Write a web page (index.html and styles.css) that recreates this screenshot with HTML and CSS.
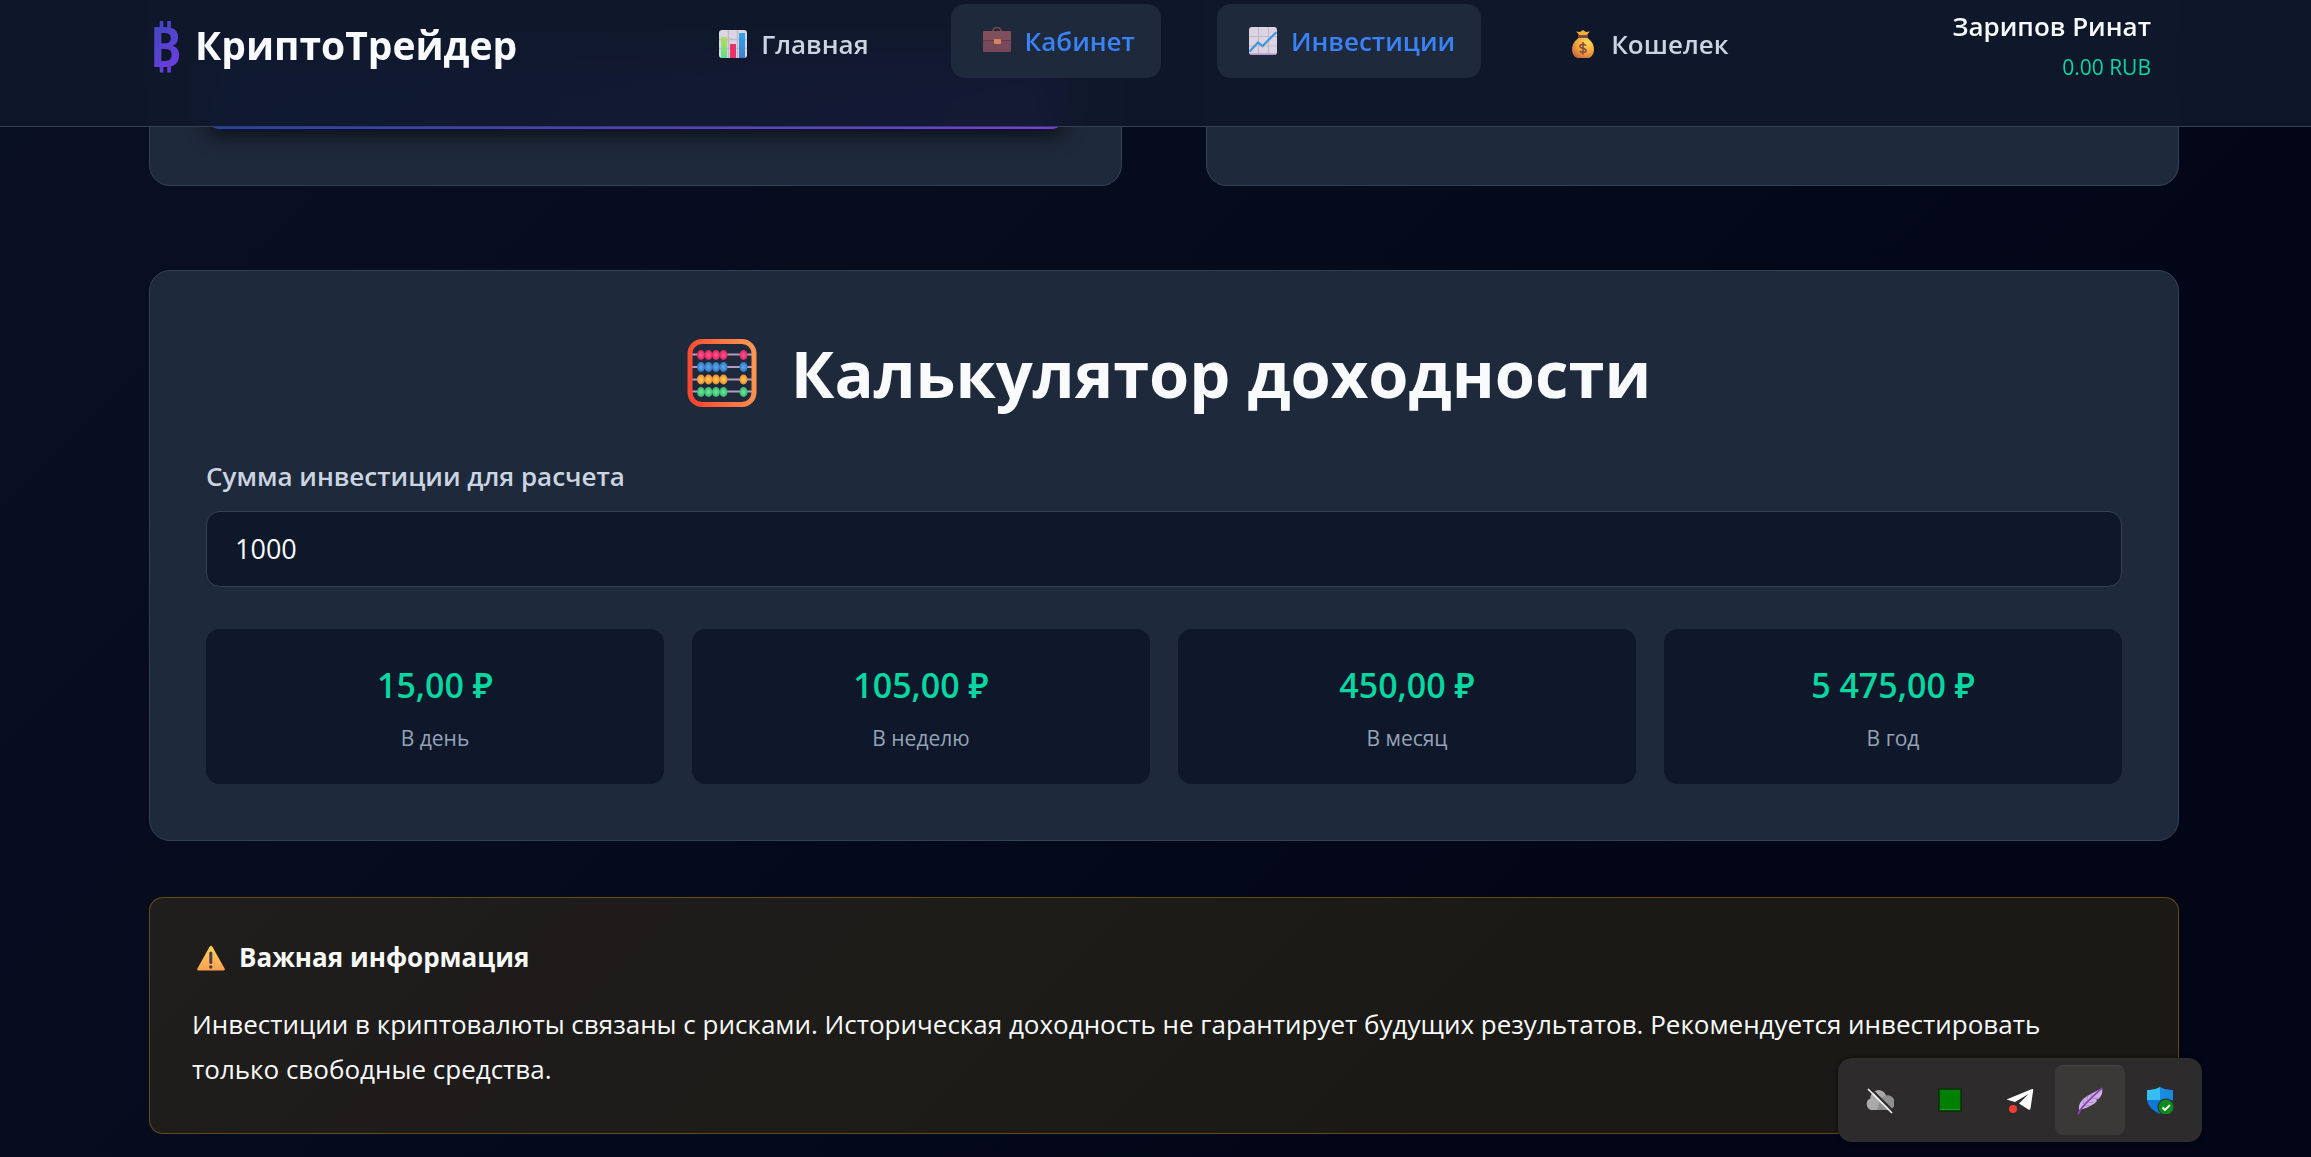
FILE: index.html
```
<!DOCTYPE html>
<html lang="ru">

<head>
    <meta charset="UTF-8">
    <meta name="viewport" content="width=device-width, initial-scale=1.0">
    <title>КриптоТрейдер</title>

    <link rel="stylesheet" href="styles.css">
</head>

<body>
    <header class="header">
        <a href="#" class="logo">
            <span class="logo-icon">₿</span>
            <span class="logo-text">КриптоТрейдер</span>
        </a>

        <nav class="nav">
            <a href="#" class="nav-link">
                <svg class="nav-icon" viewBox="0 0 28 28" aria-hidden="true">
                    <rect width="28" height="28" rx="3" fill="#dcd5e3" />
                    <path d="M9.500 0V28M18.500 0V28M0 9.500H28M0 18.500H28" stroke="#c3bac9" stroke-width="1.500" />
                    <rect x="2" y="7" width="6" height="21" fill="url(#barGreen)" />
                    <rect x="11" y="14" width="6" height="14" fill="#e8336f" />
                    <rect x="20" y="3" width="6" height="25" fill="url(#barBlue)" />
                    <defs>
                        <linearGradient id="barGreen" x2="0" y2="1">
                            <stop stop-color="#b4dd55" />
                            <stop offset="1" stop-color="#5fe08c" />
                        </linearGradient>
                        <linearGradient id="barBlue" x2="0" y2="1">
                            <stop stop-color="#2fa4f2" />
                            <stop offset="1" stop-color="#3f7fcb" />
                        </linearGradient>
                    </defs>
                </svg>
                Главная
            </a>
            <a href="#" class="nav-link active">
                <svg class="nav-icon" viewBox="0 0 28 28" aria-hidden="true">
                    <path d="M10 5V4a4 3.500 0 0 1 8 0v1" fill="none" stroke="#7c4a4c" stroke-width="1.600" />
                    <rect y="4" width="28" height="21" rx="1.500" fill="#76485a" />
                    <path d="M0 5.500Q0 4 1.500 4h25Q28 4 28 5.500V13H0z" fill="#804f5c" />
                    <path d="M0 13.500H28" stroke="#643c4c" />
                    <rect x="11" y="12" width="7" height="5" rx="1" fill="#d9825f" />
                </svg>
                Кабинет
            </a>
            <a href="#" class="nav-link active">
                <svg class="nav-icon" viewBox="0 0 28 28" aria-hidden="true">
                    <rect width="28" height="28" rx="3" fill="#dcd4e2" />
                    <path d="M9.500 0V27M19.500 0V27M0 9.500H28M0 19H28" stroke="#c3bac9" stroke-width="1.200" />
                    <path d="M1 27.200H27" stroke="#b592cf" stroke-width="1.500" />
                    <path d="M.5 24.500L9 15.500l4.500 3.500L27.500 5" fill="none" stroke="#3d97da" stroke-width="2.200" />
                </svg>
                Инвестиции
            </a>
            <a href="#" class="nav-link">
                <svg class="nav-icon" viewBox="0 0 28 28" aria-hidden="true">
                    <path d="M10 6.500L9.500 4 7 1.500l4 .5 3-2 3 2 4-.5L18.500 4 18 6.500z" fill="#f5b02f" />
                    <path d="M10.500 7.500h7C22 10 25 14 25 19.500c0 6-4 8.500-6 8.500H9c-2 0-6-2.500-6-8.500C3 14 6 10 10.500 7.500z" fill="url(#bag)" />
                    <rect x="9" y="5" width="10" height="3" rx="1" fill="#7b4a45" />
                    <path d="M17 15.500c-1-1.500-6-1.800-6 .8 0 2.700 6 1.500 6 4.200 0 2.500-5 2.500-6 .5M14 12v12.500" fill="none" stroke="#8a5145" stroke-width="1.700" />
                    <defs>
                        <radialGradient id="bag" cx=".7" cy=".25" r=".9">
                            <stop stop-color="#ffd95c" />
                            <stop offset=".5" stop-color="#f6a93d" />
                            <stop offset="1" stop-color="#c96040" />
                        </radialGradient>
                    </defs>
                </svg>
                Кошелек
            </a>
        </nav>

        <div class="user">
            <div class="user-name">Зарипов Ринат</div>
            <div class="user-balance">0.00 RUB</div>
        </div>
    </header>

    <main class="container">
        <div class="plans">
            <section class="card plan">
                <button type="button" class="btn-invest" aria-label="Инвестировать"></button>
            </section>
            <section class="card plan"></section>
        </div>

        <section class="card calculator">
            <h2 class="calculator-title">
                <svg class="title-icon" viewBox="0 0 70 70" aria-hidden="true">
                    <defs>
                        <linearGradient id="frame" x1="0" y1=".6" x2="1" y2=".4">
                            <stop stop-color="#fb4630" />
                            <stop offset="1" stop-color="#ff9550" />
                        </linearGradient>
                        <radialGradient id="beadPink">
                            <stop stop-color="#ff5c9a" />
                            <stop offset="1" stop-color="#dc2458" />
                        </radialGradient>
                        <radialGradient id="beadBlue">
                            <stop stop-color="#5ea9ec" />
                            <stop offset="1" stop-color="#3278c4" />
                        </radialGradient>
                        <radialGradient id="beadYellow">
                            <stop stop-color="#ffd152" />
                            <stop offset="1" stop-color="#ef8c35" />
                        </radialGradient>
                        <radialGradient id="beadGreen">
                            <stop stop-color="#66ee9d" />
                            <stop offset="1" stop-color="#3eb46b" />
                        </radialGradient>
                    </defs>
                    <path d="M4 16.500H66M4 29H66M4 41.500H66M4 53.500H66" stroke="#b39cc4" stroke-width="2" />
                    <g fill="url(#beadPink)">
                        <ellipse cx="14" cy="17" rx="4" ry="5" />
                        <ellipse cx="21.500" cy="17" rx="4" ry="5" />
                        <ellipse cx="29" cy="17" rx="4" ry="5" />
                        <ellipse cx="36.500" cy="17" rx="4" ry="5" />
                        <ellipse cx="56.500" cy="17" rx="4" ry="5" />
                    </g>
                    <g fill="url(#beadBlue)">
                        <ellipse cx="14" cy="29" rx="4" ry="5" />
                        <ellipse cx="21.500" cy="29" rx="4" ry="5" />
                        <ellipse cx="29" cy="29" rx="4" ry="5" />
                        <ellipse cx="36.500" cy="29" rx="4" ry="5" />
                        <ellipse cx="56.500" cy="29" rx="4" ry="5" />
                    </g>
                    <g fill="url(#beadYellow)">
                        <ellipse cx="14" cy="41.500" rx="4" ry="5" />
                        <ellipse cx="21.500" cy="41.500" rx="4" ry="5" />
                        <ellipse cx="29" cy="41.500" rx="4" ry="5" />
                        <ellipse cx="36.500" cy="41.500" rx="4" ry="5" />
                        <ellipse cx="56.500" cy="41.500" rx="4" ry="5" />
                    </g>
                    <g fill="url(#beadGreen)">
                        <ellipse cx="14" cy="54" rx="4" ry="5" />
                        <ellipse cx="21.500" cy="54" rx="4" ry="5" />
                        <ellipse cx="29" cy="54" rx="4" ry="5" />
                        <ellipse cx="36.500" cy="54" rx="4" ry="5" />
                        <ellipse cx="56.500" cy="54" rx="4" ry="5" />
                    </g>
                    <rect x="3" y="3.500" width="64" height="63" rx="12" fill="none" stroke="url(#frame)" stroke-width="5" />
                </svg>
                Калькулятор доходности
            </h2>

            <label class="form-label" for="amount">Сумма инвестиции для расчета</label>
            <input class="form-input" type="text" inputmode="numeric" id="amount" value="1000">

            <div class="results">
                <div class="result">
                    <div class="result-value">15,00 ₽</div>
                    <div class="result-label">В день</div>
                </div>
                <div class="result">
                    <div class="result-value">105,00 ₽</div>
                    <div class="result-label">В неделю</div>
                </div>
                <div class="result">
                    <div class="result-value">450,00 ₽</div>
                    <div class="result-label">В месяц</div>
                </div>
                <div class="result">
                    <div class="result-value">5 475,00 ₽</div>
                    <div class="result-label">В год</div>
                </div>
            </div>
        </section>

        <section class="notice">
            <h4 class="notice-title">
                <svg class="nav-icon" viewBox="0 0 28 28" aria-hidden="true">
                    <path d="M12.600 2.800q1.400-2 2.800 0L27.600 24.500q.8 2-1.200 2H1.600q-2 0-1.200-2z" fill="url(#warn)" />
                    <path d="M13.800 9v9.500" stroke="#4b3b4d" stroke-width="3" stroke-linecap="round" />
                    <circle cx="13.800" cy="23" r="1.700" fill="#4b3b4d" />
                    <defs>
                        <linearGradient id="warn" x2="0" y2="1">
                            <stop stop-color="#ffd45c" />
                            <stop offset="1" stop-color="#ffa052" />
                        </linearGradient>
                    </defs>
                </svg>
                Важная информация
            </h4>
            <p class="notice-text">Инвестиции в криптовалюты связаны с рисками. Историческая доходность не гарантирует будущих результатов. Рекомендуется инвестировать только свободные средства.</p>
        </section>
    </main>

    <div class="tray">
        <button type="button" class="tray-item" aria-label="OneDrive">
            <svg class="tray-icon" viewBox="0 0 28 28">
                <path d="M6 24a6 6 0 0 1-1.500-11.500A8 8 0 0 1 20 9.500 7 7 0 0 1 23 24z" fill="#8f8f8f" />
                <path d="M4.500 12.500A8 8 0 0 1 20 9.500Q14 10 11 24H6a6 6 0 0 1-1.500-11.500z" fill="#a9a9a9" />
                <path d="M4.500 2.500l23 23" stroke="#2d2b2a" stroke-width="2" />
                <path d="M2 3l24 24" stroke="#fff" stroke-width="1.600" />
            </svg>
        </button>
        <button type="button" class="tray-item" aria-label="Монитор">
            <svg class="tray-icon" viewBox="0 0 28 28">
                <rect x="3" y="3" width="22" height="22" fill="#008000" stroke="#0c2f0a" stroke-width="1.500" />
                <path d="M4 23.500H24" stroke="#11a011" />
            </svg>
        </button>
        <button type="button" class="tray-item" aria-label="Telegram">
            <svg class="tray-icon" viewBox="0 0 28 28">
                <path d="M.5 13.500L26 3q1.500-.5 1.200 1.200L24.500 22.500q-.5 2.200-2.500.8L13 17.500 22.500 8 9 16z" fill="#fff" />
                <circle cx="7" cy="23" r="4" fill="#f23c2f" />
            </svg>
        </button>
        <button type="button" class="tray-item selected" aria-label="Перо">
            <svg class="tray-icon" viewBox="0 0 28 28">
                <path d="M3 23C2 16 7 11 14 7.500L26 1c1 5-.5 8-3.500 11l-2.500.8 1 1.200C16 19.500 9 21.500 3 23z" fill="#cdb2e6" />
                <path d="M7 17l1-4M11 13l1-4.500M15 10l1-3.500M9 19l5-.5M13 15.500l5-.5M17 11.500l5-.5" stroke="#a984d0" />
                <path d="M2 27.500C5 20 14 12 26 1" fill="none" stroke="#8a3fb0" stroke-width="1.800" />
            </svg>
        </button>
        <button type="button" class="tray-item" aria-label="Защитник">
            <svg class="tray-icon" viewBox="0 0 28 28">
                <path d="M14 1Q8 4.500 1 4V14h13z" fill="#36bdf2" />
                <path d="M14 1q6 3.500 13 3v10H14z" fill="#1a8ae0" />
                <path d="M1 14h13v14Q2 23 1 14z" fill="#0f78d4" />
                <path d="M14 14h13q-1 9-13 14z" fill="#0a5cb0" />
                <circle cx="20" cy="21" r="8.500" fill="#2c2b2d" />
                <circle cx="20" cy="21" r="7.500" fill="#0f8a1e" />
                <path d="M16.500 21.500l2.500 2.500 5-5" fill="none" stroke="#fff" stroke-width="1.800" />
            </svg>
        </button>
    </div>
</body>

</html>
```
FILE: styles.css
```
* {
    box-sizing: border-box;
    margin: 0;
    padding: 0;
}

body {
    min-height: 100vh;
    font-family: "Open Sans", "Noto Sans", sans-serif;
    font-size: 26px;
    line-height: 45px;
    color: #f8fafc;
    background: linear-gradient(135deg, #0a1024 0%, #020617 75%, #020617 100%);
}

/* header */

.header {
    position: fixed;
    top: 0;
    left: 0;
    right: 0;
    z-index: 10;
    display: flex;
    justify-content: space-between;
    align-items: center;
    padding: 2px 132px 40px 149px;
    background: rgba(15, 23, 42, 0.95);
    border-bottom: 1px solid #334155;
    backdrop-filter: blur(20px);
}

.logo {
    display: flex;
    align-items: center;
    gap: 14px;
    color: #f8fafc;
    font-size: 39px;
    font-weight: 700;
    text-decoration: none;
}

.logo-icon {
    padding-top: 2px;
    font-size: 56px;
    font-weight: 600;
    line-height: 82px;
    background: linear-gradient(135deg, #2f4bb0, #7c3aed);
    -webkit-background-clip: text;
    background-clip: text;
    color: transparent;
}

.nav {
    display: flex;
    gap: 56px;
}

.nav-link {
    display: flex;
    align-items: center;
    gap: 14px;
    height: 74px;
    padding: 0 26px 0 32px;
    border-radius: 14px;
    color: #cbd5e1;
    font-weight: 600;
    text-decoration: none;
}

.nav-link.active {
    color: #3b82f6;
    background: #1e293b;
    transform: translateY(-3px);
}

.nav-icon {
    width: 28px;
    height: 28px;
}

.user {
    padding: 0 28px;
    text-align: right;
}

.user-name {
    font-weight: 600;
}

.user-balance {
    color: #06d6a0;
    font-size: 21px;
    line-height: 36px;
}

/* content */

.container {
    padding: 0 132px 22px 149px;
}

.card {
    background: #1e293b;
    border: 1px solid #334155;
    border-radius: 21px;
}

.plans {
    display: grid;
    grid-template-columns: 1fr 1fr;
    gap: 84px;
    margin-bottom: 84px;
}

.plan {
    padding: 55px 56px 56px;
    border-top: none;
    border-radius: 0 0 21px 21px;
}

.btn-invest {
    display: block;
    width: 100%;
    height: 74px;
    border: none;
    border-radius: 14px;
    background: linear-gradient(135deg, #1e40af, #7c3aed);
    box-shadow: 0 7px 20px rgba(0, 0, 0, 0.6);
    cursor: pointer;
}

.calculator {
    padding: 56px;
    margin-bottom: 56px;
}

.calculator-title {
    display: flex;
    justify-content: center;
    align-items: center;
    gap: 34px;
    margin-bottom: 35px;
    padding-left: 10px;
    font-size: 65px;
    font-weight: 700;
    line-height: 92px;
}

.title-icon {
    width: 70px;
    height: 70px;
}

.form-label {
    display: block;
    margin-bottom: 12px;
    color: #cbd5e1;
    font-weight: 600;
}

.form-input {
    display: block;
    width: 100%;
    height: 76px;
    margin-bottom: 42px;
    padding: 0 28px 2px;
    border: 1px solid #334155;
    border-radius: 14px;
    background: #0f172a;
    color: #f8fafc;
    font-family: inherit;
    font-size: 27px;
}

.results {
    display: grid;
    grid-template-columns: repeat(4, 1fr);
    gap: 28px;
}

.result {
    padding: 28px;
    border-radius: 14px;
    background: #0f172a;
    text-align: center;
}

.result-value {
    margin-bottom: 7px;
    color: #06d6a0;
    font-size: 34px;
    font-weight: 600;
    line-height: 56px;
}

.result-label {
    color: #94a3b8;
    font-size: 21px;
    line-height: 36px;
}

.notice {
    padding: 43px 42px 41px;
    border: 1px solid rgba(255, 193, 7, 0.3);
    border-radius: 14px;
    background: rgba(255, 193, 7, 0.1);
}

.notice-title {
    display: flex;
    align-items: center;
    gap: 14px;
    margin-bottom: 28px;
    padding-left: 5px;
    font-size: 26px;
    font-weight: 700;
    line-height: 33px;
}

.notice-text {
    padding-right: 28px;
}

/* tray */

.tray {
    position: fixed;
    right: 109px;
    bottom: 15px;
    z-index: 20;
    display: flex;
    padding: 7px;
    border-radius: 14px;
    background: #2d2b2b;
    box-shadow: 0 0 4px rgba(0, 0, 0, 0.5);
}

.tray-item {
    display: flex;
    justify-content: center;
    align-items: center;
    width: 70px;
    height: 70px;
    border: none;
    border-radius: 8px;
    background: none;
}

.tray-item.selected {
    background: #3a3938;
    border-top: 1px solid #444342;
}

.tray-icon {
    width: 28px;
    height: 28px;
}
```
